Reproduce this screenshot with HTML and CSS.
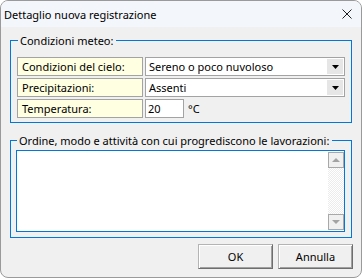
FILE: index.html
```html
<!DOCTYPE html>
<html lang="it">
<head>
<meta charset="utf-8">
<title>Dettaglio nuova registrazione</title>
<link rel="stylesheet" href="styles.css">
</head>
<body>
<div class="window">
  <div class="titlebar">
    <span class="title">Dettaglio nuova registrazione</span>
    <svg class="close" width="10" height="10" viewBox="0 0 10 10"><path d="M0.5 0.5L9.5 9.5M9.5 0.5L0.5 9.5" stroke="#1f1f1f" stroke-width="1"/></svg>
  </div>
  <div class="body">
    <fieldset class="group meteo">
      <legend>Condizioni meteo:</legend>
      <div class="grid">
        <div class="lbl">Condizioni del cielo:</div>
        <div class="combo"><span class="val">Sereno o poco nuvoloso</span><span class="drop"><svg width="7" height="4" viewBox="0 0 7 4"><path d="M0 0H7L3.5 4Z" fill="#000"/></svg></span></div>
        <div class="lbl">Precipitazioni:</div>
        <div class="combo"><span class="val">Assenti</span><span class="drop"><svg width="7" height="4" viewBox="0 0 7 4"><path d="M0 0H7L3.5 4Z" fill="#000"/></svg></span></div>
        <div class="lbl">Temperatura:</div>
        <div class="temp"><div class="input">20</div><span class="unit">°C</span></div>
      </div>
    </fieldset>
    <fieldset class="group ordine">
      <legend>Ordine, modo e attività con cui progrediscono le lavorazioni:</legend>
      <div class="textarea">
        <div class="text"></div>
        <div class="scrollbar">
          <div class="sbtn"><svg width="8" height="4" viewBox="0 0 8 4"><path d="M0 4H8L4 0Z" fill="#a3a3a3"/></svg></div>
          <div class="track"></div>
          <div class="sbtn"><svg width="8" height="4" viewBox="0 0 8 4"><path d="M0 0H8L4 4Z" fill="#a3a3a3"/></svg></div>
        </div>
      </div>
    </fieldset>
    <div class="buttons">
      <button class="btn">OK</button>
      <button class="btn">Annulla</button>
    </div>
  </div>
</div>
</body>
</html>
```
FILE: styles.css
```css
html, body {
  margin: 0;
  padding: 0;
  background: #ffffff;
}
body {
  font-family: "Noto Sans", "Liberation Sans", sans-serif;
  font-size: 11px;
  color: #000;
}
.window {
  width: 362px;
  height: 278px;
  box-sizing: border-box;
  border: 1px solid #9a9a9a;
  border-radius: 8px;
  background: #f0f0f0;
  overflow: hidden;
  display: flex;
  flex-direction: column;
}
.titlebar {
  height: 26px;
  flex: none;
  background: #f3f6fb;
  display: flex;
  align-items: center;
  padding-left: 3px;
}
.title {
  font-size: 11px;
  line-height: 15px;
}
.close {
  margin-left: auto;
  margin-right: 9px;
  display: block;
}
.body {
  padding: 6px 9px 0 9px;
  display: flex;
  flex-direction: column;
}
.group {
  margin: 0;
  min-width: 0;
  border: 1px solid #0078d7;
  padding: 9px 6px 4px 6px;
}
.group legend {
  line-height: 15px;
  margin-left: 1px;
  padding: 0 3px 0 2px;
}
.grid {
  display: grid;
  grid-template-columns: 126px 200px;
  grid-auto-rows: 19px;
  column-gap: 2px;
  row-gap: 2px;
}
.lbl {
  box-sizing: border-box;
  border: 1px solid #a3a3a3;
  background: #ffffe1;
  padding: 0 4px;
  display: flex;
  align-items: center;
  white-space: nowrap;
}
.combo {
  box-sizing: border-box;
  border: 1px solid #a3a3a3;
  background: #fff;
  display: flex;
  align-items: stretch;
  padding: 1px 1px 1px 0;
}
.combo .val {
  flex: 1;
  display: flex;
  align-items: center;
  padding-left: 3px;
  white-space: nowrap;
}
.drop {
  width: 16px;
  background: #e6e6e6;
  display: flex;
  align-items: center;
  justify-content: center;
}
.drop svg { display: block; }
.temp {
  display: flex;
  align-items: center;
  gap: 4px;
}
.input {
  box-sizing: border-box;
  width: 39px;
  height: 19px;
  border: 1px solid #a3a3a3;
  background: #fff;
  padding-left: 2px;
  display: flex;
  align-items: center;
}
.ordine {
  margin-top: 10px;
  padding: 2px 6px 5px 5px;
}
.textarea {
  box-sizing: border-box;
  height: 82px;
  border: 1px solid #0078d7;
  background: #fff;
  display: flex;
  padding: 1px 0 1px 0;
}
.text { flex: 1; }
.scrollbar {
  width: 16px;
  display: flex;
  flex-direction: column;
}
.sbtn {
  box-sizing: border-box;
  height: 16px;
  border: 1px solid #a8a8a8;
  background: #f0f0f0;
  display: flex;
  align-items: center;
  justify-content: center;
}
.sbtn svg { display: block; }
.track {
  flex: 1;
  background: conic-gradient(#ececec 25%, #ffffff 0 50%, #ececec 0 75%, #ffffff 0) 0 0 / 2px 2px;
}
.buttons {
  margin-top: 6px;
  margin-right: -1px;
  display: flex;
  justify-content: flex-end;
  gap: 5px;
}
.btn {
  width: 75px;
  height: 25px;
  box-sizing: border-box;
  font-family: inherit;
  font-size: 11px;
  color: #000;
  background: #f0f0f0;
  border: 1px solid;
  border-color: #b4b4b4 #6e6e6e #6e6e6e #b4b4b4;
  box-shadow: inset 1px 1px #ffffff, inset -1px -1px #a0a0a0;
  padding: 0;
  border-radius: 0;
}
```
